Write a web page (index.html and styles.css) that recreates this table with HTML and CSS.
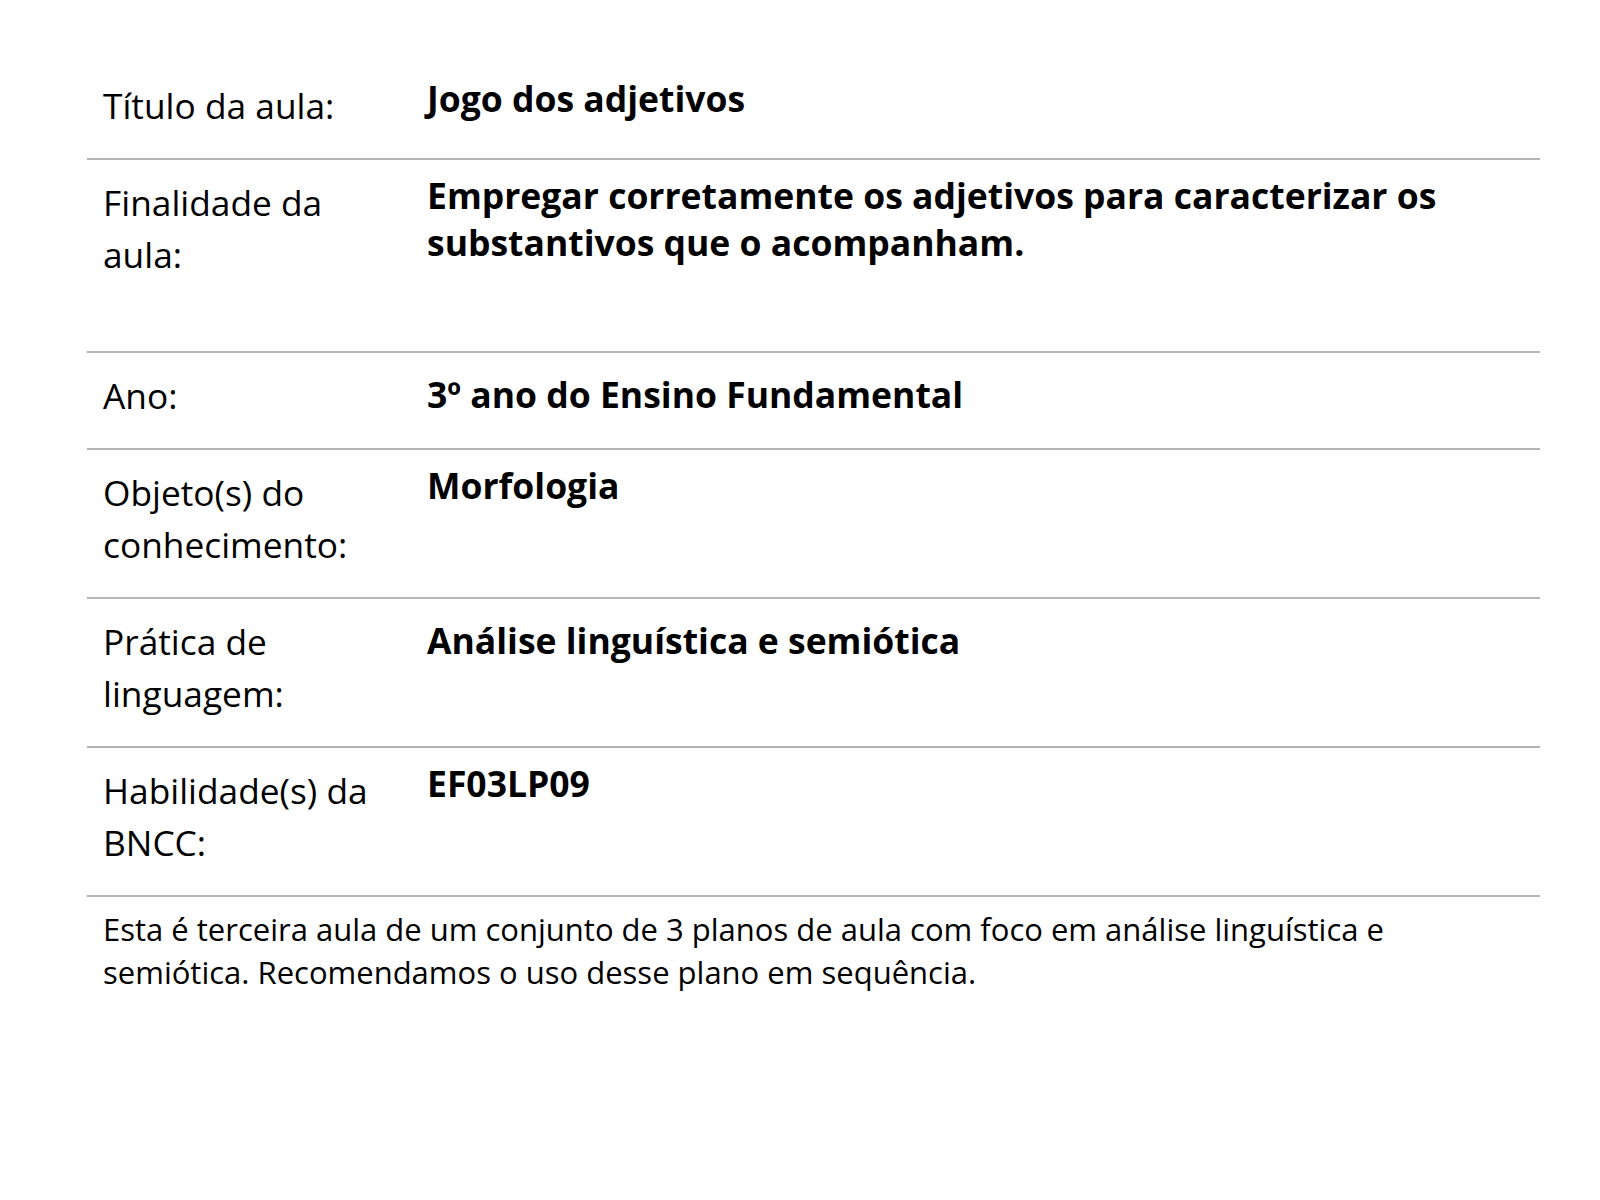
FILE: index.html
```html
<!DOCTYPE html>
<html lang="pt-BR">
<head>
<meta charset="utf-8">
<title>Plano de aula</title>
<link rel="stylesheet" href="styles.css">
</head>
<body>
<main class="sheet">
  <div class="row">
    <div class="label">Título da aula:</div>
    <div class="value">Jogo dos adjetivos</div>
  </div>
  <div class="row row-tall">
    <div class="label">Finalidade da<br>aula:</div>
    <div class="value">Empregar corretamente os adjetivos para caracterizar os substantivos que o acompanham.</div>
  </div>
  <div class="row">
    <div class="label">Ano:</div>
    <div class="value value-level">3º ano do Ensino Fundamental</div>
  </div>
  <div class="row">
    <div class="label">Objeto(s) do<br>conhecimento:</div>
    <div class="value">Morfologia</div>
  </div>
  <div class="row">
    <div class="label">Prática de<br>linguagem:</div>
    <div class="value value-level">Análise linguística e semiótica</div>
  </div>
  <div class="row">
    <div class="label">Habilidade(s) da<br>BNCC:</div>
    <div class="value">EF03LP09</div>
  </div>
  <p class="note">Esta é terceira aula de um conjunto de 3 planos de aula com foco em análise linguística e semiótica. Recomendamos o uso desse plano em sequência.</p>
</main>
</body>
</html>
```

FILE: styles.css
```css
html, body {
  margin: 0;
  padding: 0;
  background: #ffffff;
}

body {
  font-family: "Open Sans", "Noto Sans", sans-serif;
  color: #000000;
}

.sheet {
  width: 1453px;
  margin: 0 0 0 87px;
  padding-top: 63px;
}

.row {
  display: grid;
  grid-template-columns: 340px 1fr;
  padding: 16px 0 27px;
  border-bottom: 2px solid #b4b4b4;
}

.row-tall {
  padding-bottom: 71px;
}

.label {
  padding-left: 16px;
  font-size: 35.3px;
  line-height: 52px;
  font-weight: 400;
}

.value {
  font-size: 35.5px;
  line-height: 47px;
  font-weight: 700;
  margin-top: -4px;
}

.value-level {
  margin-top: 2px;
}

.note {
  margin: 0;
  padding: 11px 16px 0 16px;
  font-size: 31px;
  line-height: 43px;
}
```
